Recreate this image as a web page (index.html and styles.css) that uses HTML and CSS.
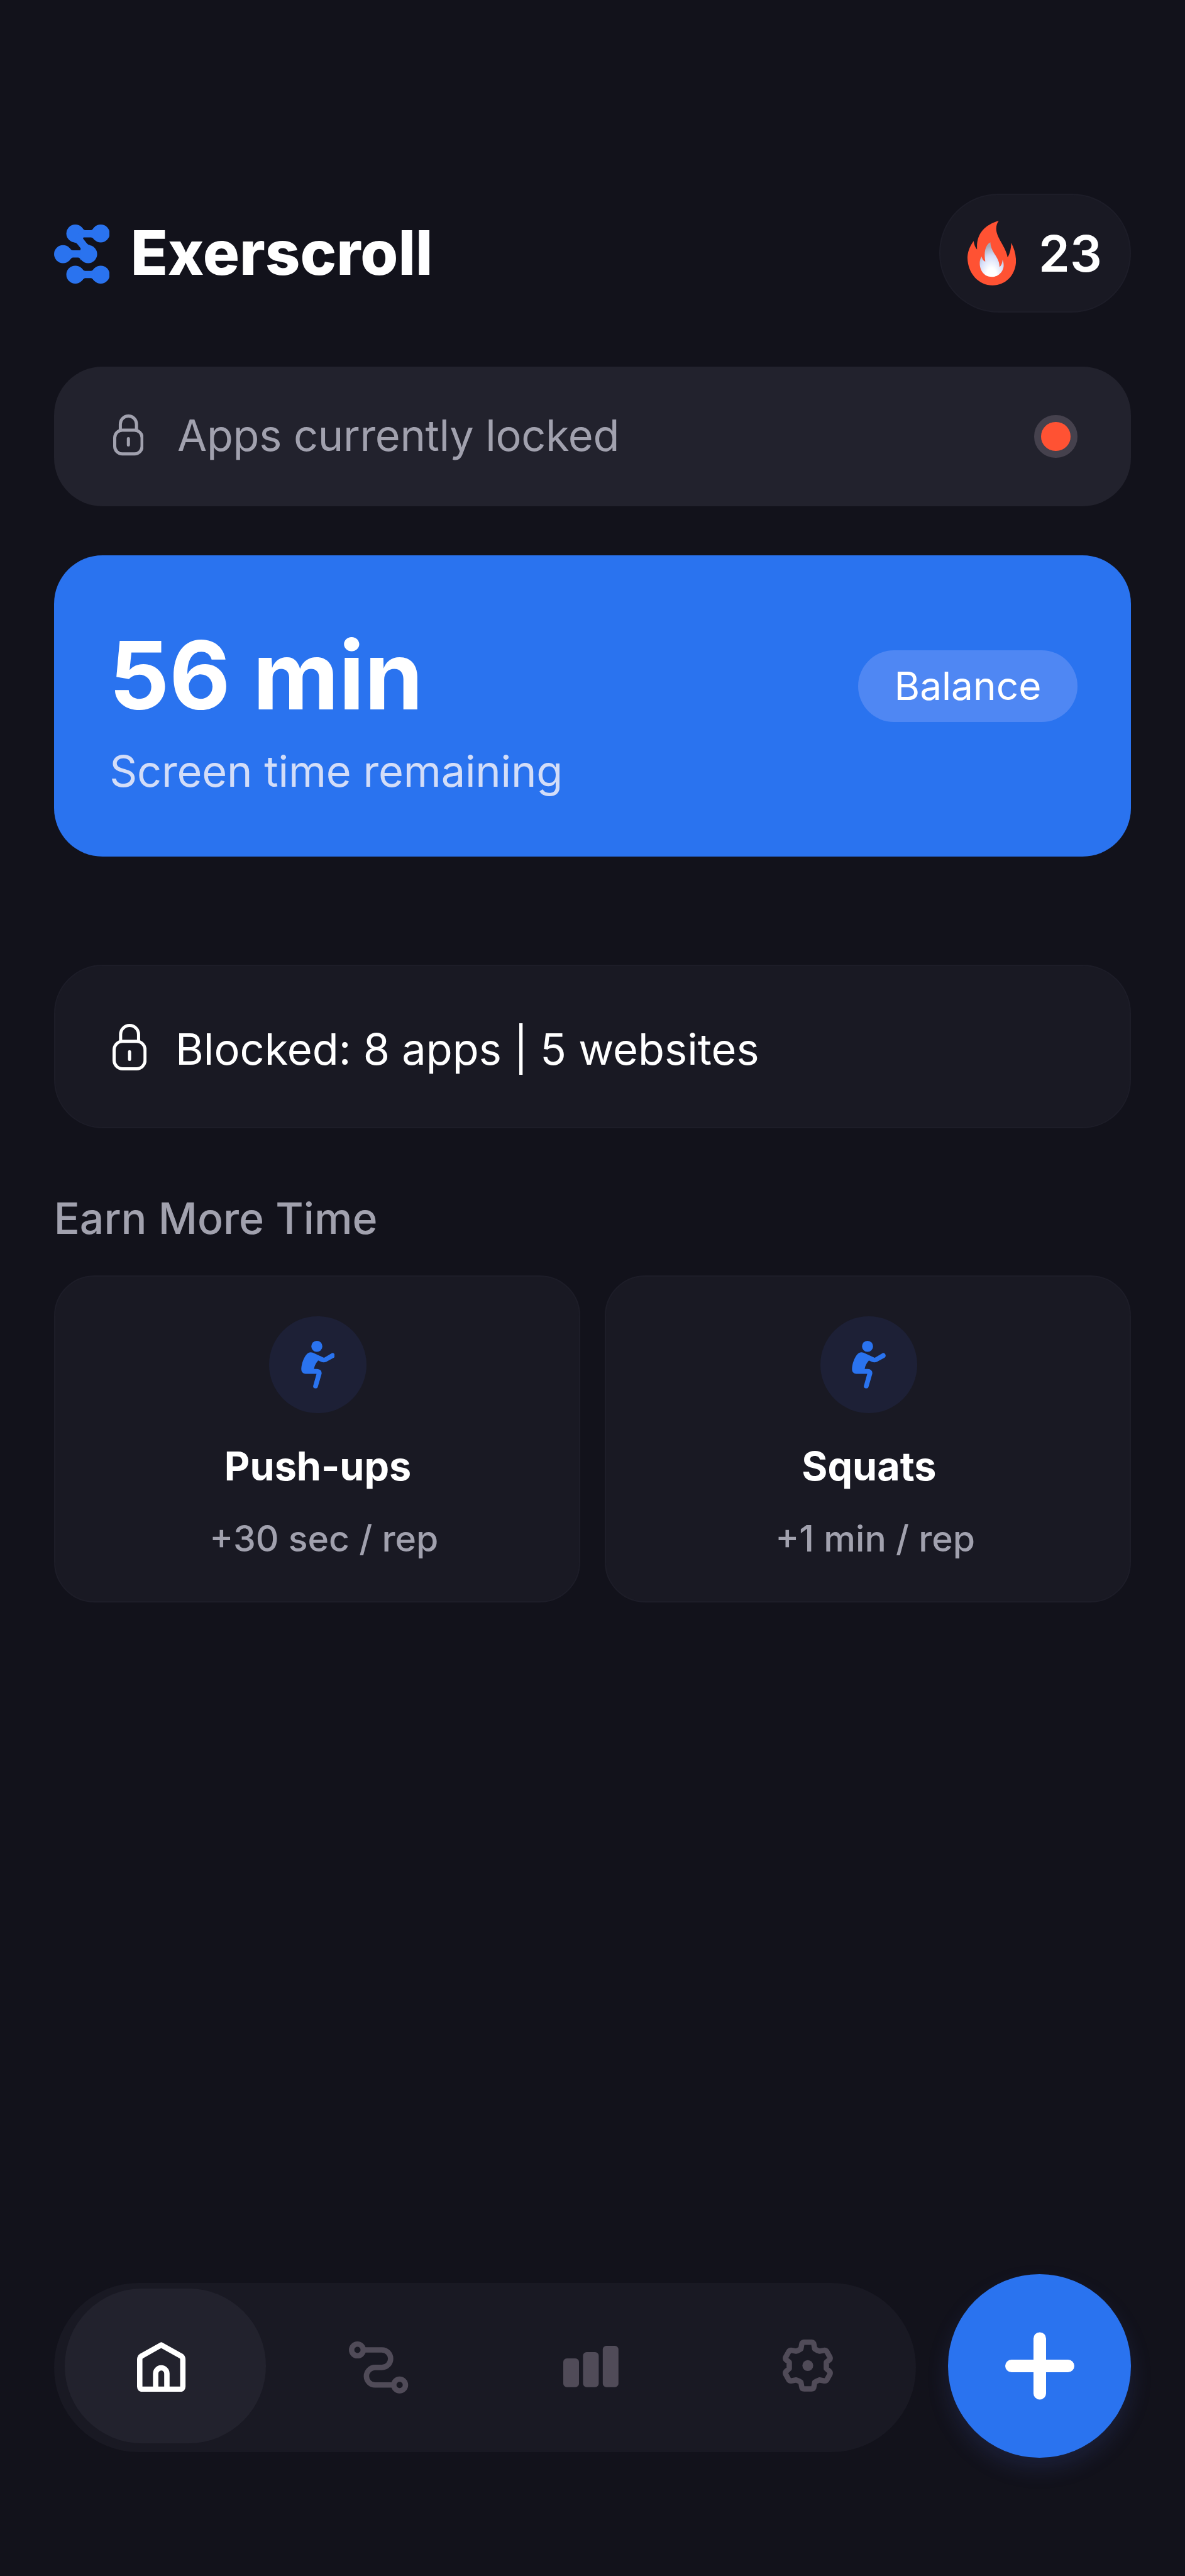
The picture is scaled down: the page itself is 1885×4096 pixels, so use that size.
FILE: index.html
```html
<!DOCTYPE html>
<html lang="en">
<head>
    <meta charset="UTF-8">
    <meta name="viewport" content="width=device-width, initial-scale=1.0">
    <title>Exerscroll</title>
    <link rel="stylesheet" href="styles.css">
</head>
<body>
    <!-- Shared icons -->
    <svg class="sprite" aria-hidden="true">
        <symbol id="squat" viewBox="211 170 226 318">
            <circle cx="316" cy="207" r="37"/>
            <path d="M276 247Q288 247 300 254L364 283L412 255A16 16 0 0 1 430 282L378 311Q362 317 346 311L325 301Q300 330 297 358H318Q350 360 348 390L323 476A15.5 15.5 0 0 1 292 469L314 391H240Q212 388 212 358C214 320 228 285 245 263Q258 248 276 247Z"/>
        </symbol>
    </svg>

    <div class="app">
        <header class="header">
            <div class="brand">
                <svg class="logo" viewBox="30 59 372 395">
                    <circle cx="172" cy="119" r="60"/>
                    <circle cx="342" cy="119" r="60"/>
                    <circle cx="90" cy="257" r="60"/>
                    <circle cx="258" cy="257" r="60"/>
                    <circle cx="172" cy="394" r="60"/>
                    <circle cx="342" cy="394" r="60"/>
                    <path d="M212 75C226 90 228 97 243 97H272C287 97 288 90 302 75V163C288 148 287 145 272 145H226Q221 149 225 155L250 186Q258 196 270 197L240 257H208V231Q210 222 206 216L186 190Q178 180 165 179Z"/>
                    <path d="M130 213C144 228 146 231 161 231H210V300C202 284 200 280 187 280H161C146 280 144 287 130 301Z"/>
                    <path d="M212 350C226 365 228 369 243 369H272C287 369 288 365 302 350V438C288 423 287 417 272 417H243C228 417 226 423 212 438Z"/>
                </svg>
                <h1>Exerscroll</h1>
            </div>
            <div class="streak">
                <svg class="flame" viewBox="288 276 324 432">
                    <defs>
                        <radialGradient id="glow" gradientUnits="userSpaceOnUse" cx="448" cy="650" r="230" gradientTransform="translate(179 0) scale(.6 1)">
                            <stop offset="0.25" stop-color="#ffffff"/>
                            <stop offset="0.62" stop-color="#d3dcf7"/>
                            <stop offset="0.9" stop-color="#a6a9b8"/>
                        </radialGradient>
                    </defs>
                    <path fill="#ff5233" d="M497 276C400 305 345 365 352 468C340 455 332 435 329 411C300 450 288 490 288 525C290 630 365 708 455 708C550 708 612 630 612 545C612 500 600 460 580 423C580 460 572 495 556 521C545 450 480 390 480 330C480 305 488 288 497 276Z"/>
                    <path fill="url(#glow)" d="M441 420C405 440 397 490 407 548C395 545 385 530 383 514C372 530 369 545 370 565C372 610 400 651 450 651C500 651 530 610 530 573C530 560 527 547 522 538C521 560 515 575 502 586C505 520 443 490 441 420Z"/>
                </svg>
                <span>23</span>
            </div>
        </header>

        <section class="status">
            <svg class="lock-small" viewBox="0 0 68 92">
                <rect x="3.5" y="35" width="61" height="53" rx="17"/>
                <path d="M16 35V21.5a18 18 0 0 1 36 0V35M34 54v14"/>
            </svg>
            <p>Apps currently locked</p>
            <span class="dot"></span>
        </section>

        <section class="balance">
            <div>
                <h2>56 min</h2>
                <p>Screen time remaining</p>
            </div>
            <span class="tag">Balance</span>
        </section>

        <section class="blocked">
            <svg class="lock" viewBox="0 0 76 104">
                <rect x="3.5" y="39" width="69" height="61" rx="19"/>
                <path d="M18 39V23.500a20 20 0 0 1 40 0V39M38 62v17"/>
            </svg>
            <p>Blocked: 8 apps | 5 websites</p>
        </section>

        <h3 class="section-title">Earn More Time</h3>
        <div class="exercises">
            <div class="exercise">
                <div class="exercise-icon"><svg><use href="#squat"/></svg></div>
                <h4>Push-ups</h4>
                <p>+30 sec / rep</p>
            </div>
            <div class="exercise">
                <div class="exercise-icon"><svg><use href="#squat"/></svg></div>
                <h4>Squats</h4>
                <p>+1 min / rep</p>
            </div>
        </div>

        <footer class="bottom">
            <nav class="tabs">
                <a class="tab active">
                    <svg class="icon-home" viewBox="0 0 108 111">
                        <path d="M54 6.500L98 31Q102 33.500 102 39V99Q102 105 96 105H12Q6 105 6 99V39Q6 33.500 10 31Z"/>
                        <path d="M41.500 105V70a12.500 12.500 0 0 1 25 0V105"/>
                    </svg>
                </a>
                <a class="tab">
                    <svg class="icon-route" viewBox="0 0 132 116">
                        <circle cx="19" cy="19" r="13"/>
                        <circle cx="113" cy="97" r="13"/>
                        <path d="M36 19H73.500a19.500 19.500 0 0 1 0 39H58.500a19.500 19.500 0 0 0 0 39H96"/>
                    </svg>
                </a>
                <a class="tab">
                    <svg class="icon-bars" viewBox="0 0 123 92">
                        <rect x="0" y="28" width="35" height="64" rx="8"/>
                        <rect x="44" y="14" width="35" height="78" rx="8"/>
                        <rect x="88" y="0" width="35" height="92" rx="8"/>
                    </svg>
                </a>
                <a class="tab">
                    <svg class="icon-gear" viewBox="72 60 336 348">
                        <path d="M215 78H265Q280 80 281 95L286 122Q300 132 318 138L350 132Q362 132 368 142L388 178Q392 188 386 194L364 212V254L386 274Q392 282 388 292L368 328Q362 338 350 336L318 330Q300 336 286 346L281 374Q280 390 265 390H215Q200 390 199 374L194 346Q180 336 162 330L130 336Q118 338 112 328L92 292Q88 282 94 274L116 254V212L94 194Q88 188 92 178L112 142Q118 132 130 132L162 138Q180 132 194 122L199 95Q200 80 215 78Z"/>
                        <circle cx="240" cy="234" r="36"/>
                    </svg>
                </a>
            </nav>
            <button class="add" aria-label="Add">
                <svg viewBox="0 0 154 154"><path d="M14 77H140M77 16V138"/></svg>
            </button>
        </footer>
    </div>
</body>
</html>
```

FILE: styles.css
```css
:root {
    --bg: #12121b;
    --card: #191923;
    --card-border: #1d1d28;
    --raised: #22222d;
    --blue: #2a73ef;
    --red: #ff5233;
    --muted: #a1a1ae;
    --icon: #504b58;
}

/* 1rem is 10pt on a 440pt wide screen */
html {
    font-size: calc(100vw / 44);
}

* {
    box-sizing: border-box;
    margin: 0;
    padding: 0;
}

body {
    background-color: var(--bg);
    color: #fff;
    font-family: Inter, sans-serif;
}

svg {
    display: block;
    flex-shrink: 0;
}

.sprite {
    display: none;
}

.app {
    display: flex;
    flex-direction: column;
    height: 100vh;
    padding: 7.2rem 2rem 4.4rem;
}

.header {
    display: flex;
    justify-content: space-between;
    align-items: center;
    height: 4.4rem;
}

.brand {
    display: flex;
    align-items: center;
    gap: 0.78rem;
}

.logo {
    width: 2.067rem;
    height: 2.194rem;
    margin-top: 0.05rem;
    fill: var(--blue);
}

h1 {
    font-size: 2.267rem;
    font-weight: 800;
    line-height: 2.6rem;
    margin-top: -0.05rem;
}

.streak {
    display: flex;
    align-items: center;
    width: 7.133rem;
    height: 4.4rem;
    padding-left: 1rem;
    border: 0.067rem solid var(--card-border);
    border-radius: 2.2rem;
    background-color: var(--card);
    font-size: 1.867rem;
    font-weight: 600;
}

.flame {
    width: 1.8rem;
    height: 2.4rem;
    margin-right: 0.85rem;
}

.status {
    display: flex;
    align-items: center;
    height: 5.2rem;
    margin-top: 2rem;
    padding: 0 2rem 0 2.2rem;
    border-radius: 1.8rem;
    background-color: var(--raised);
    color: var(--muted);
    font-size: 1.6rem;
    letter-spacing: -0.005em;
}

.status p {
    margin: -0.06rem auto 0 1.25rem;
}

.lock-small,
.lock {
    fill: none;
    stroke: currentColor;
    stroke-width: 7;
    stroke-linecap: round;
}

.lock-small {
    width: 1.133rem;
    height: 1.533rem;
    margin-top: -0.08rem;
}

.dot {
    width: 1.6rem;
    height: 1.6rem;
    border: 0.267rem solid #45414d;
    border-radius: 50%;
    background-color: var(--red);
}

.balance {
    display: flex;
    justify-content: space-between;
    align-items: flex-start;
    height: 11.2rem;
    margin-top: 1.8rem;
    padding: 2.467rem 2rem 0 2.07rem;
    border-radius: 1.8rem;
    background-color: var(--blue);
}

h2 {
    margin-left: -0.02rem;
    font-size: 3.5rem;
    font-weight: 700;
    line-height: 4rem;
}

.balance p {
    margin-top: 0.64rem;
    color: #d3ddf8;
    font-size: 1.6rem;
    letter-spacing: -0.003em;
    line-height: 1.867rem;
}

.tag {
    width: 8.133rem;
    margin-top: 1.067rem;
    border-radius: 1.333rem;
    background-color: #4f87f3;
    font-size: 1.45rem;
    line-height: 2.667rem;
    text-align: center;
}

.blocked {
    display: flex;
    align-items: center;
    height: 6.067rem;
    margin-top: 4rem;
    padding-left: 2.13rem;
    border: 0.067rem solid var(--card-border);
    border-radius: 1.8rem;
    background-color: var(--card);
    font-size: 1.6rem;
}

.blocked p {
    margin: 0.22rem 0 0 1.07rem;
}

.lock {
    width: 1.267rem;
    height: 1.733rem;
    margin-top: 0.07rem;
}

.section-title {
    margin: 2.37rem 0 1.097rem;
    color: var(--muted);
    font-size: 1.59rem;
    font-weight: 500;
    line-height: 2rem;
}

.exercises {
    display: grid;
    grid-template-columns: 1fr 1fr;
    gap: 0.933rem;
}

.exercise {
    display: flex;
    flex-direction: column;
    align-items: center;
    height: 12.133rem;
    padding: 1.467rem 0 0 0.067rem;
    border: 0.067rem solid var(--card-border);
    border-radius: 1.5rem;
    background-color: var(--card);
}

.exercise-icon {
    display: flex;
    justify-content: center;
    align-items: center;
    width: 3.6rem;
    height: 3.6rem;
    border-radius: 50%;
    background-color: #1d2036;
}

.exercise-icon svg {
    width: 1.256rem;
    height: 1.767rem;
    fill: var(--blue);
}

h4 {
    margin-top: 1.09rem;
    font-size: 1.467rem;
    font-weight: 700;
    line-height: 1.733rem;
}

.exercise p {
    margin-top: 1.06rem;
    padding-left: 0.46rem;
    color: var(--muted);
    font-size: 1.333rem;
    font-weight: 500;
    line-height: 1.6rem;
}

.bottom {
    display: flex;
    align-items: flex-start;
    gap: 1.2rem;
    margin-top: auto;
}

.tabs {
    display: grid;
    grid-template-columns: repeat(4, 1fr);
    flex: 1;
    height: 6.267rem;
    margin-top: 0.333rem;
    border-radius: 3.133rem;
    background-color: var(--card);
}

.tab {
    display: flex;
    justify-content: center;
    align-items: center;
    position: relative;
    color: var(--icon);
}

.tab svg {
    position: relative;
    fill: none;
    stroke: currentColor;
    stroke-width: 12;
}

.tab.active {
    color: #fff;
}

/* Highlight behind the selected tab */
.tab.active::before {
    content: "";
    position: absolute;
    top: 0.2rem;
    left: 0.4rem;
    width: 7.467rem;
    height: 5.733rem;
    border-radius: 2.867rem;
    background-color: var(--raised);
}

.icon-home {
    width: 1.8rem;
    height: 1.85rem;
    margin-top: -0.05rem;
    stroke-linejoin: round;
}

.icon-route {
    width: 2.2rem;
    height: 1.933rem;
    margin-left: 0.13rem;
}

.tab .icon-bars {
    width: 2.05rem;
    height: 1.533rem;
    margin: -0.067rem 0.1rem 0 0;
    fill: currentColor;
    stroke: none;
}

.tab .icon-gear {
    width: 1.867rem;
    height: 1.933rem;
    margin-top: -0.133rem;
    stroke-width: 36;
    stroke-linejoin: round;
}

.tab .icon-gear circle {
    fill: currentColor;
    stroke: none;
}

.add {
    display: flex;
    justify-content: center;
    align-items: center;
    width: 6.8rem;
    height: 6.8rem;
    border: none;
    border-radius: 50%;
    background-color: var(--blue);
    box-shadow: 0 0.4rem 0.8rem rgba(72, 95, 190, 0.18);
}

.add svg {
    width: 2.567rem;
    height: 2.567rem;
    fill: none;
    stroke: #fff;
    stroke-width: 28;
    stroke-linecap: round;
}
```
